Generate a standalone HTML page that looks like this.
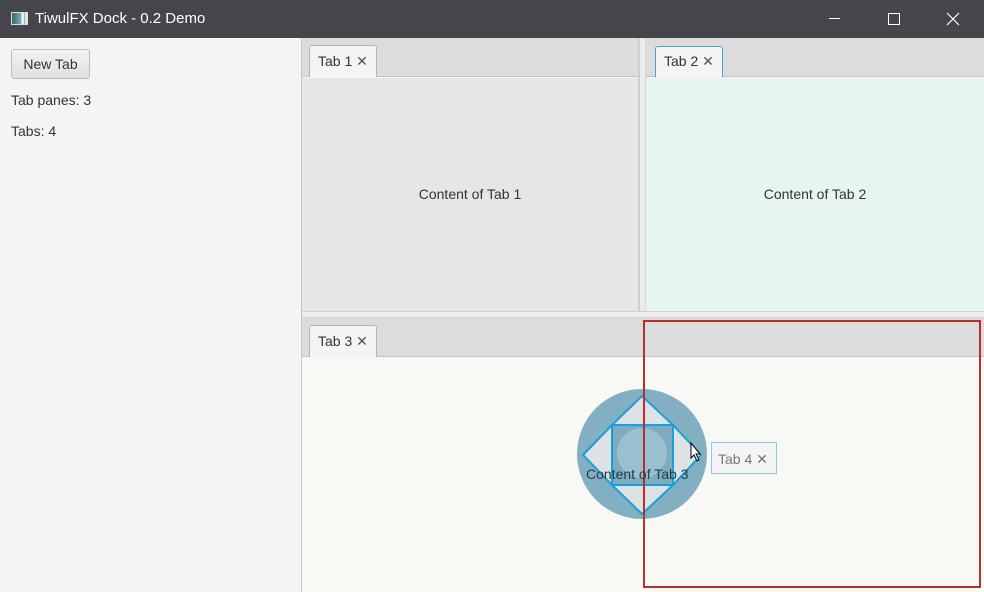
<!DOCTYPE html>
<html><head><style>
*{margin:0;padding:0;box-sizing:border-box}
body{width:984px;height:592px;overflow:hidden;font-family:"Liberation Sans",sans-serif;font-size:14px;color:#333;background:#f4f4f4;position:relative}
.a{position:absolute}
.tab{position:absolute;height:32px;border:1px solid #b5b5b5;border-bottom:none;border-radius:3px 3px 0 0;background:#f4f4f4;padding:7px 8px 0 8px;font-size:14px;color:#333;white-space:nowrap}
</style></head><body>
<div class="a" style="left:0;top:0;width:984px;height:38px;background:#45464b"></div>
<div class="a" style="left:11px;top:12px;width:17px;height:13px;background:linear-gradient(90deg,#2f6a68,#7ab 60%,#eee 65%,#eee 80%,#5a9 85%,#eee 90%);border:1px solid #ddd"></div>
<div class="a" style="left:35px;top:10px;color:#fff;font-size:15px">TiwulFX Dock - 0.2 Demo</div>
<div class="a" style="left:829px;top:18px;width:11px;height:1px;background:#fff"></div>
<div class="a" style="left:888px;top:13px;width:12px;height:12px;border:1px solid #fff"></div>
<svg class="a" style="left:946px;top:12px" width="14" height="14"><path d="M1,1L13,13M13,1L1,13" stroke="#fff" stroke-width="1.2"/></svg>

<div class="a" style="left:11px;top:49px;width:79px;height:30px;border:1px solid #bdbdbd;border-radius:3px;background:linear-gradient(#f3f3f3,#e0e0e0);text-align:center;line-height:28px;font-size:14px">New Tab</div>
<div class="a" style="left:11px;top:92px">Tab panes: 3</div>
<div class="a" style="left:11px;top:123px">Tabs: 4</div>

<div class="a" style="left:301px;top:38px;width:1px;height:554px;background:#c8c8c8"></div>
<div class="a" style="left:302px;top:38px;width:336px;height:39px;background:#dcdcdc;border-bottom:1px solid #c4c4c4"></div>
<div class="tab" style="left:309px;top:45px">Tab 1 <span style="color:#555">✕</span></div>
<div class="a" style="left:302px;top:78px;width:336px;height:233px;background:#e6e6e6"></div>
<div class="a" style="left:302px;top:186px;width:336px;text-align:center">Content of Tab 1</div>
<div class="a" style="left:638px;top:38px;width:8px;height:274px;background:#ececec;border-left:2px solid #cfcfcf;border-right:1px solid #d8d8d8"></div>
<div class="a" style="left:646px;top:38px;width:338px;height:39px;background:#dcdcdc;border-bottom:1px solid #c4c4c4"></div>
<div class="tab" style="left:655px;top:46px;border:1px solid #3aa7d8;border-bottom:none;height:31px;padding-top:6px">Tab 2 <span style="color:#555">✕</span></div>
<div class="a" style="left:646px;top:78px;width:338px;height:233px;background:#e6f5f0"></div>
<div class="a" style="left:646px;top:186px;width:338px;text-align:center">Content of Tab 2</div>
<div class="a" style="left:302px;top:311px;width:682px;height:7px;background:#ececec;border-top:1px solid #d0d0d0;border-bottom:1px solid #d0d0d0"></div>
<div class="a" style="left:302px;top:318px;width:682px;height:39px;background:#dcdcdc;border-bottom:1px solid #c4c4c4"></div>
<div class="tab" style="left:309px;top:325px">Tab 3 <span style="color:#555">✕</span></div>
<div class="a" style="left:302px;top:358px;width:682px;height:234px;background:#f8f8f4"></div>
<svg class="a" style="left:0;top:0" width="984" height="592">
<circle cx="642" cy="454" r="65" fill="#6fa2b8" fill-opacity="0.85"/>
<g stroke="#1aa0d8" stroke-width="2" fill="#e8e8e8" fill-opacity="0.9">
<polygon points="642,396 612,425 673,425"/>
<polygon points="642,514 612,485 673,485"/>
<polygon points="583,455 612,425 612,485"/>
<polygon points="701,455 673,425 673,485"/>
<rect x="612" y="425" width="61" height="60" fill="#7aa9bd" fill-opacity="0.6"/>
</g>
<circle cx="642" cy="453" r="25" fill="#a6c8d6" fill-opacity="0.7"/>
<rect x="644" y="321" width="336" height="266" fill="none" stroke="#b52f2f" stroke-width="2"/>
<path d="M691,443 L691,458 L694,455 L697,461 L699,460 L696,454 L700,454 Z" fill="#fff" stroke="#000" stroke-width="1"/>
</svg>
<div class="a" style="left:586px;top:466px;width:120px;color:#2a3a44;white-space:nowrap">Content of Tab 3</div>
<div class="a" style="left:711px;top:442px;width:66px;height:32px;border:1px solid #8cc9e3;background:#f4f4f4;padding:8px 6px;color:#777">Tab 4 ✕</div>
</body></html>
